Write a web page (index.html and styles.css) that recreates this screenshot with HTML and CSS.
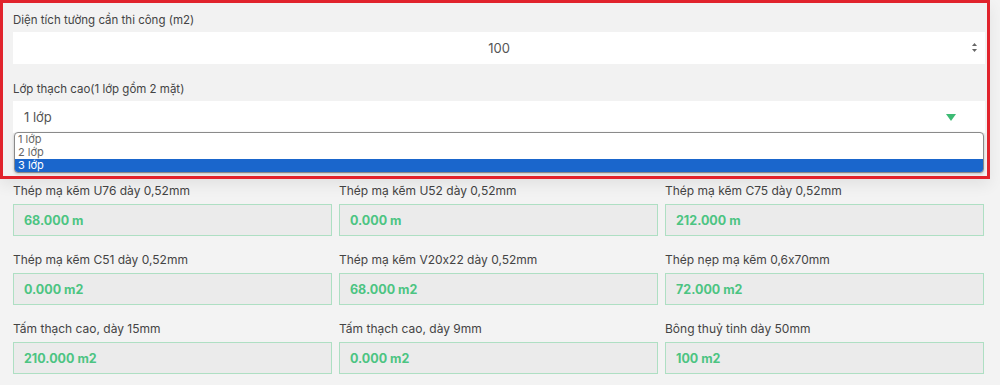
FILE: index.html
```html
<!DOCTYPE html>
<html lang="vi">
<head>
<meta charset="utf-8">
<link rel="stylesheet" href="styles.css">
</head>
<body>
<div class="frame">
  <div class="field-label">Diện tích tường cần thi công (m2)</div>
  <div class="num-input">
    <span class="num-value">100</span>
    <svg class="spinner" width="7" height="11" viewBox="0 0 7 11"><path d="M3.5 1 L6 4 L1 4 Z" fill="#666"/><path d="M3.5 10 L6 7 L1 7 Z" fill="#666"/></svg>
  </div>
  <div class="field-label second">Lớp thạch cao(1 lớp gồm 2 mặt)</div>
  <div class="select">
    <span class="select-value">1 lớp</span>
    <svg class="caret" width="10" height="7" viewBox="0 0 10 7"><path d="M0 0 L10 0 L5 7 Z" fill="#3dbb74"/></svg>
  </div>
  <div class="listbox">
    <div class="opt">1 lớp</div>
    <div class="opt">2 lớp</div>
    <div class="opt selected">3 lớp</div>
  </div>
</div>
<div class="grid">
  <div class="cell"><div class="cell-label">Thép mạ kẽm U76 dày 0,52mm</div><div class="out">68.000 m</div></div>
  <div class="cell"><div class="cell-label">Thép mạ kẽm U52 dày 0,52mm</div><div class="out">0.000 m</div></div>
  <div class="cell"><div class="cell-label">Thép mạ kẽm C75 dày 0,52mm</div><div class="out">212.000 m</div></div>
  <div class="cell"><div class="cell-label">Thép mạ kẽm C51 dày 0,52mm</div><div class="out">0.000 m2</div></div>
  <div class="cell"><div class="cell-label">Thép mạ kẽm V20x22 dày 0,52mm</div><div class="out">68.000 m2</div></div>
  <div class="cell"><div class="cell-label">Thép nẹp mạ kẽm 0,6x70mm</div><div class="out">72.000 m2</div></div>
  <div class="cell"><div class="cell-label">Tấm thạch cao, dày 15mm</div><div class="out">210.000 m2</div></div>
  <div class="cell"><div class="cell-label">Tấm thạch cao, dày 9mm</div><div class="out">0.000 m2</div></div>
  <div class="cell"><div class="cell-label">Bông thuỷ tinh dày 50mm</div><div class="out">100 m2</div></div>
</div>
</body>
</html>
```
FILE: styles.css
```css
* { box-sizing: border-box; }
html, body { margin: 0; padding: 0; }
body {
  background: #f3f3f3;
  font-family: Inter, "Noto Sans", sans-serif;
  font-feature-settings: "calt" 0;
  color: #444;
  width: 1000px;
  height: 385px;
  overflow: hidden;
}
.frame {
  width: 990px;
  border: 3px solid #e1232c;
  background: #f2f2f2;
  padding: 9px 2px 3px 10px;
  box-shadow: 0 6px 14px rgba(0,0,0,0.07);
  position: relative;
}
.field-label {
  font-size: 11.5px;
  line-height: 16px;
  height: 16px;
  color: #444;
  margin-bottom: 4px;
}
.field-label.second { margin-top: 17px; }
.num-input {
  height: 32px;
  background: #fff;
  display: flex;
  align-items: center;
  justify-content: center;
  position: relative;
}
.num-value { font-size: 13px; color: #555; }
.spinner { position: absolute; right: 7px; top: 10px; }
.select {
  height: 32px;
  background: #fff;
  display: flex;
  align-items: center;
  justify-content: space-between;
  padding: 0 29px 0 11px;
}
.select-value { font-size: 13px; color: #555; }
.listbox {
  margin: -1px 1px 0 1px;
  border: 1px solid #8a8a8a;
  border-radius: 4px;
  background: #fff;
  overflow: hidden;
  box-shadow: 0 1px 3px rgba(0,0,0,0.2);
}
.opt {
  font-size: 11px;
  line-height: 13px;
  height: 13px;
  padding-left: 3px;
  color: #666;
}
.opt.selected { background: #1a66cc; color: #fff; }
.grid {
  display: grid;
  grid-template-columns: repeat(3, 319px);
  column-gap: 7px;
  row-gap: 17px;
  padding: 5px 0 0 13px;
}
.cell-label {
  font-size: 12px;
  line-height: 14px;
  color: #444;
  margin-bottom: 6px;
}
.out {
  height: 32px;
  background: #ebebeb;
  border: 1.5px solid #aedfc3;
  display: flex;
  align-items: center;
  padding-left: 10px;
  font-size: 12.5px;
  font-weight: 700;
  color: #4cc482;
}
```
